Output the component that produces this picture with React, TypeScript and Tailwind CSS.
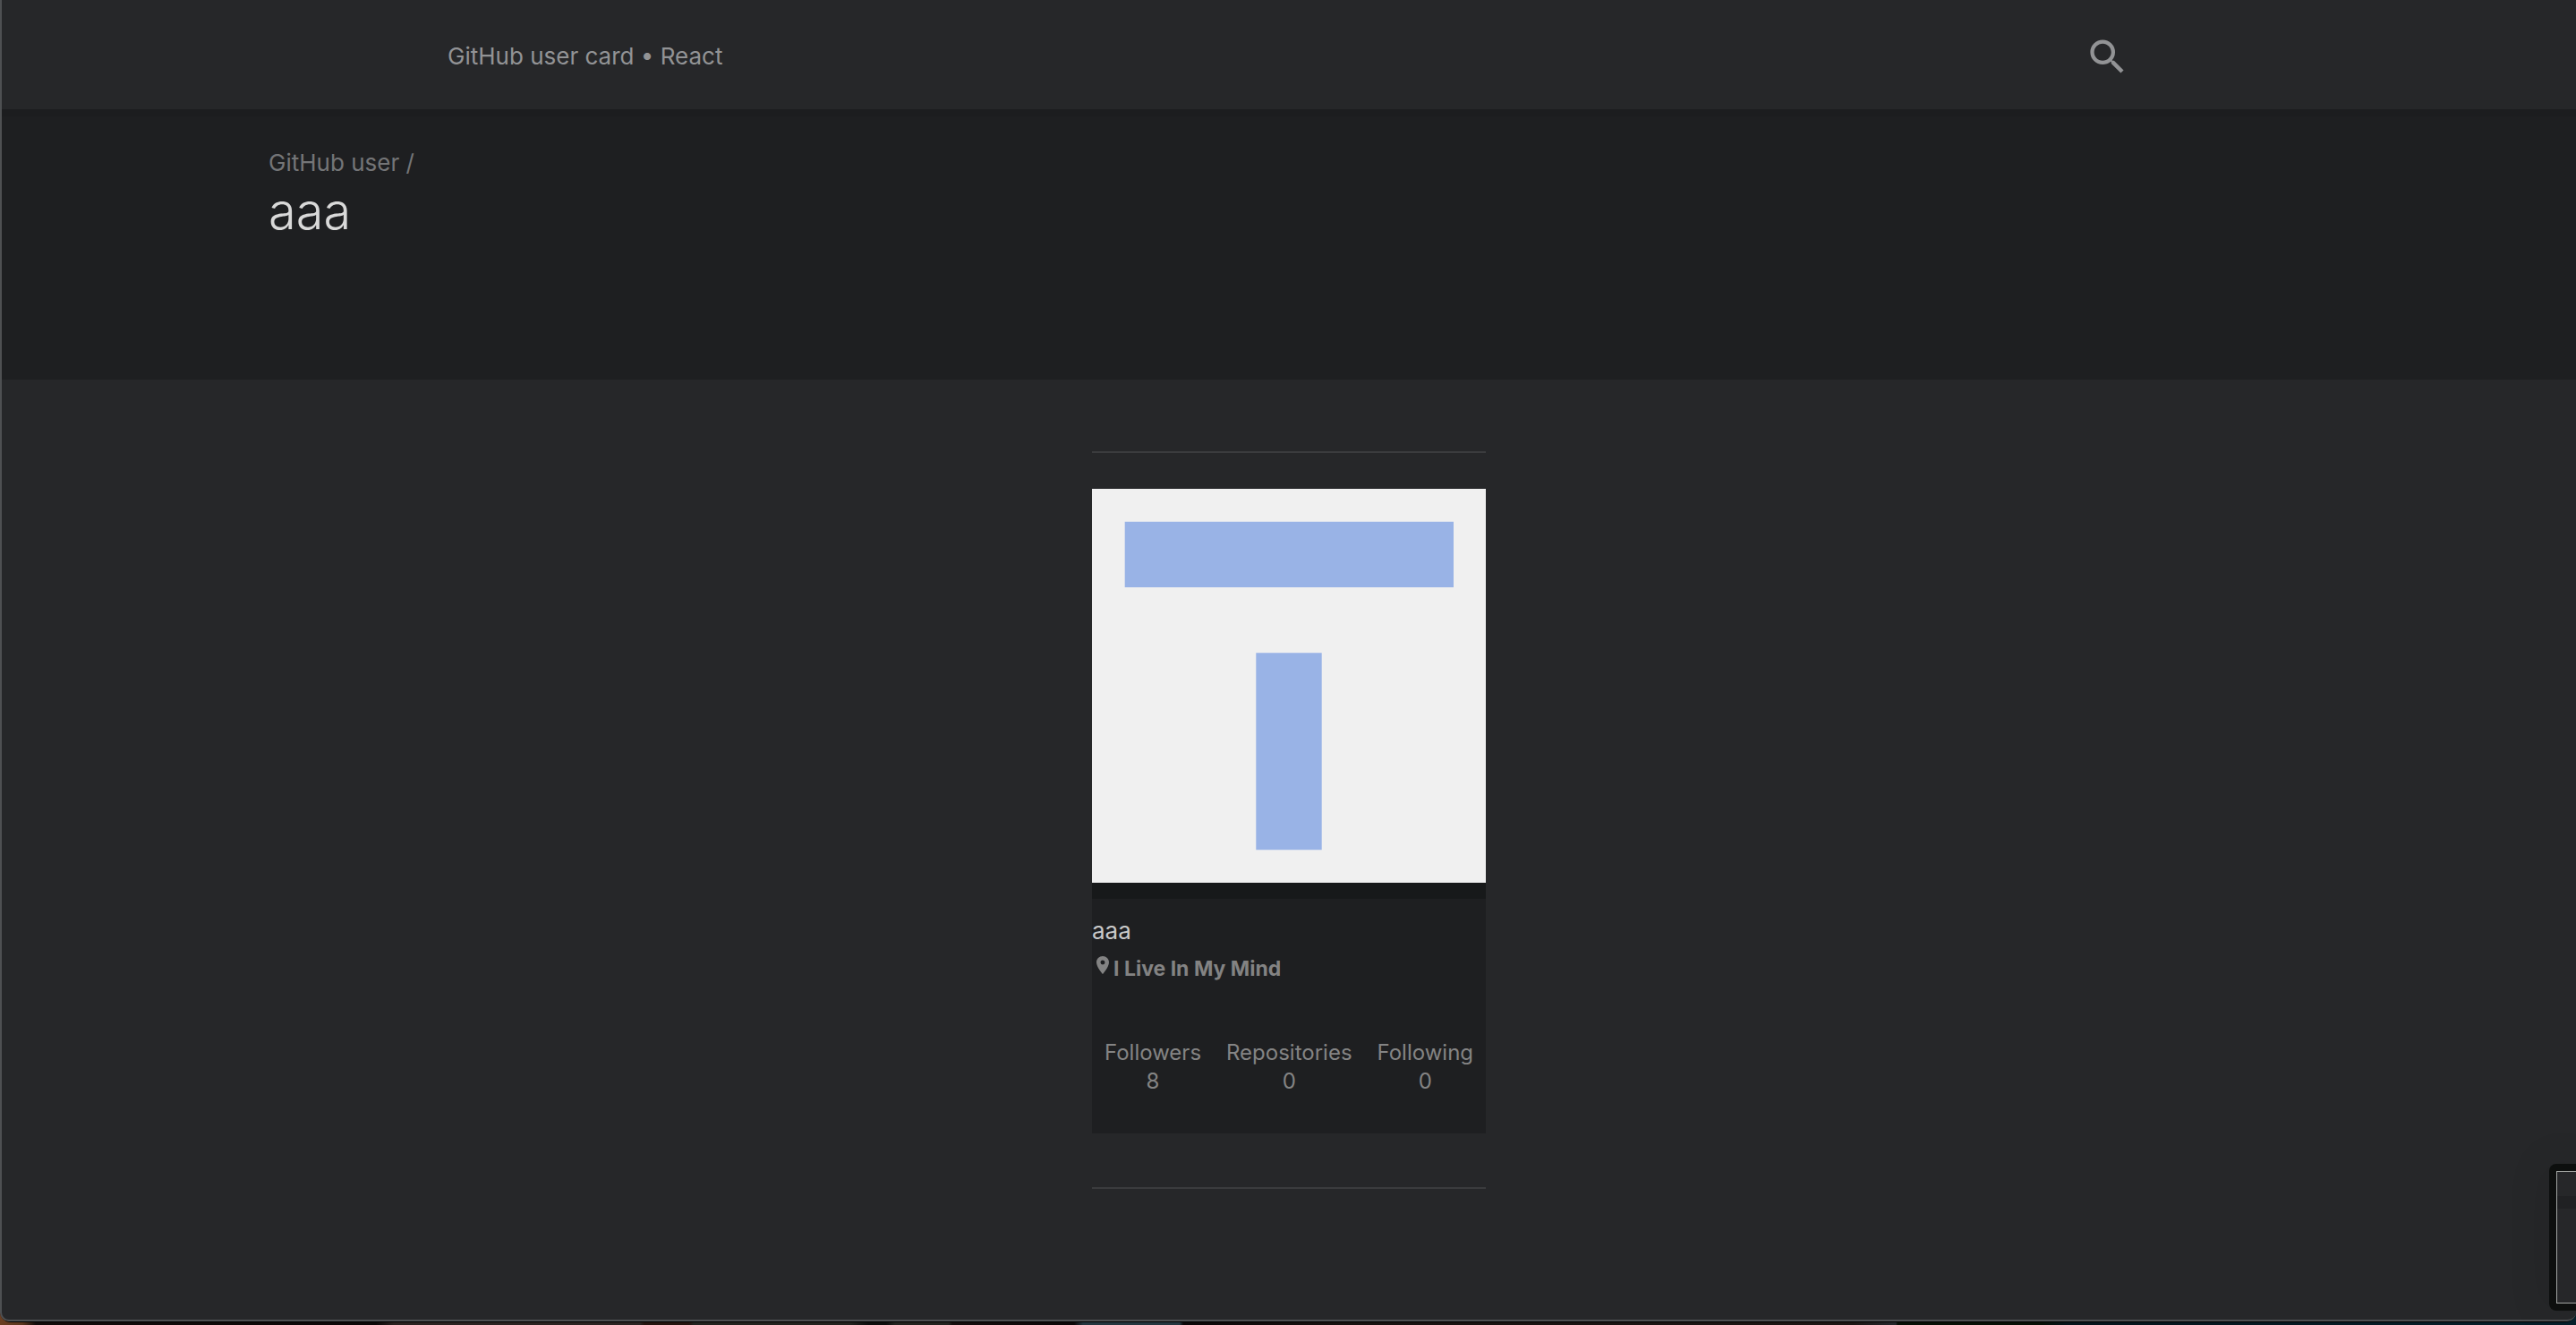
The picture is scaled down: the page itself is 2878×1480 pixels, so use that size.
import React from "react";
import { MdLocationOn, MdSearch } from "react-icons/md";

const stats = [
  { label: "Followers", value: 8 },
  { label: "Repositories", value: 0 },
  { label: "Following", value: 0 },
];

function Header() {
  return (
    <header className="flex h-[122px] items-center justify-between pt-1 pr-[498px] pl-[498px] text-[#929395]">
      <a href="#" className="text-[26px] leading-9">
        GitHub user card • React
      </a>
      <button type="button" aria-label="Search">
        <MdSearch size={51} />
      </button>
    </header>
  );
}

function Title() {
  return (
    <section className="h-[302px] border-t-8 border-[#1c1d1f] bg-[#1e1f21] px-[298px] pt-[34px]">
      <p className="text-[26px] leading-9 text-[#747577]">GitHub user /</p>
      <h1 className="text-[56px] leading-[72px] font-light text-[#d9d9d9]">aaa</h1>
    </section>
  );
}

function Avatar() {
  return (
    <svg viewBox="0 0 440 440" className="block w-full bg-[#f0f0f0]" role="img" aria-label="aaa">
      <path fill="#99b3e6" d="M36.7 36.7h367.3v73.3H36.7zM183.3 183.3h73.4v220h-73.4z" />
    </svg>
  );
}

function UserCard() {
  return (
    <article className="my-10 bg-[#1e1f21]">
      <Avatar />
      <div className="h-[18px] bg-[#17191a]" />
      <div className="pt-[18px] pb-[42px]">
        <h2 className="text-[26px] leading-9 text-[#c8c8c8]">aaa</h2>
        <p className="flex text-[23px] leading-[48px] font-bold text-[#838383]">
          <MdLocationOn size={24} className="mt-2" />
          I Live In My Mind
        </p>
        <dl className="mt-[54px] flex justify-around text-center text-2xl leading-8 text-[#848484]">
          {stats.map((s) => (
            <div key={s.label}>
              <dt>{s.label}</dt>
              <dd>{s.value}</dd>
            </div>
          ))}
        </dl>
      </div>
    </article>
  );
}

function FloatingPreview() {
  return (
    <div className="absolute right-0 bottom-4 h-[164px] w-[30px] rounded-l-lg bg-[#0d0f0e] py-2 pl-2 shadow-[0_0_48px_rgba(0,0,0,0.12)]">
      <div className="h-full border-y border-l border-[#a2a5a2] bg-[#262729] pt-[27px]">
        <div className="h-[14px] bg-[#202123]" />
      </div>
    </div>
  );
}

export default function App() {
  return (
    <div className="relative flex min-h-screen flex-col overflow-hidden bg-[linear-gradient(90deg,#6b3f22_0,#5a351d_25px,#120c0b_40px,#0c0808_420px,#2a2220_440px,#2a2422_715px,#24140f_720px,#24140f_770px,#22231f_775px,#22231f_950px,#0d0e0d_970px,#0d0e0d_990px,#22231f_1000px,#22231f_1060px,#150e0e_1064px,#0b0708_1200px,#24363f_1210px,#24363f_1318px,#0b0708_1322px,#171210_1500px,#1c1614_2070px,#24282c_2118px,#071006_2120px,#071006_2280px,#06141b_2310px,#06202b_2878px)] pb-[3px] font-[Inter,sans-serif]">
      <div className="flex flex-1 flex-col rounded-b-xl border-b border-black">
        <div className="flex-1 rounded-b-[10px] border-b-2 border-l-2 border-[#4e5052] bg-[#262729]">
          <Header />
          <Title />
          <main className="mx-auto w-[440px] pt-20">
            <hr className="border-t-2 border-[#3b3c3e]" />
            <UserCard />
            <hr className="mt-[60px] border-t-2 border-[#3b3c3e]" />
          </main>
        </div>
      </div>
      <FloatingPreview />
    </div>
  );
}
